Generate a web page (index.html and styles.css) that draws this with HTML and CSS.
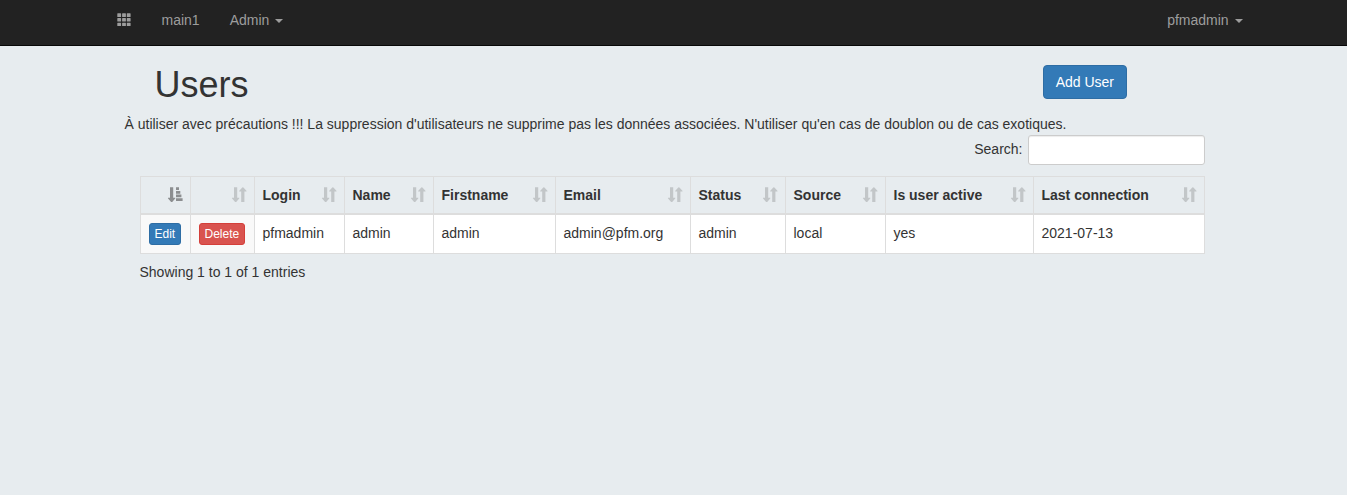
FILE: index.html
```html
<!DOCTYPE html>
<html lang="en">
<head>
<meta charset="utf-8">
<title>Users</title>
<link rel="stylesheet" href="styles.css">
</head>
<body>
<svg class="defs" aria-hidden="true">
  <symbol id="sort" viewBox="0 0 14 15">
    <path d="M2 .3h3.200V10.700h1.900q.5.2.1.7L4.200 14.900q-.6.400-1.100 0L.1 11.400q-.4-.5.1-.7H2z"/>
    <path d="M9.200 15V4.500H7.400q-.5-.2-.1-.7L10.300.5q.5-.4 1.100 0L14.400 3.800q.4.5-.1.700h-1.900V15z"/>
  </symbol>
  <symbol id="sort-asc" viewBox="0 0 14 15">
    <path d="M2 .3h3.200V10.700h1.900q.5.2.1.7L4.200 14.900q-.6.400-1.100 0L.1 11.400q-.4-.5.1-.7H2z"/>
    <path d="M8 .3h3v2.800H8zM8 3.900h4.300v2.800H8zM8 7.500h5.400v2.800H8zM8 11.200h6.600V14H8z"/>
  </symbol>
</svg>
<nav class="navbar">
  <a class="nav-item nav-grid"><svg class="grid-icon" viewBox="0 0 14 14"><path d="M.8.3h2.8q.5 0 .5.5v2.6q0 .5-.5.5H.8q-.5 0-.5-.5V.8Q.3.3.8.3zM5.6.3h2.8q.5 0 .5.5v2.6q0 .5-.5.5H5.6q-.5 0-.5-.5V.8q0-.5.5-.5zM10.3.3h2.8q.5 0 .5.5v2.6q0 .5-.5.5h-2.8q-.5 0-.5-.5V.8q0-.5.5-.5zM.8 5h2.8q.5 0 .5.5v2.6q0 .5-.5.5H.8q-.5 0-.5-.5V5.500Q.3 5 .8 5zM5.600 5h2.8q.5 0 .5.5v2.6q0 .5-.5.5H5.6q-.5 0-.5-.5V5.5q0-.5.5-.5zM10.3 5h2.8q.5 0 .5.5v2.6q0 .5-.5.5h-2.8q-.5 0-.5-.5V5.5q0-.5.5-.5zM.8 9.700h2.800q.5 0 .5.5v2.300q0 .5-.5.5H.8q-.5 0-.5-.5v-2.300q0-.5.5-.5zM5.600 9.700h2.800q.5 0 .5.5v2.300q0 .5-.5.5H5.600q-.5 0-.5-.5v-2.300q0-.5.5-.5zM10.300 9.700h2.800q.5 0 .5.5v2.300q0 .5-.5.5h-2.800q-.5 0-.5-.5v-2.300q0-.5.5-.5z"/></svg></a>
  <a class="nav-item">main1</a>
  <a class="nav-item">Admin <b class="caret"></b></a>
  <a class="nav-item nav-user">pfmadmin <b class="caret"></b></a>
</nav>
<main class="page">
  <header class="page-head">
    <h1 class="title">Users</h1>
    <button class="btn btn-primary">Add User</button>
  </header>
  <p class="notice">À utiliser avec précautions !!! La suppression d'utilisateurs ne supprime pas les données associées. N'utiliser qu'en cas de doublon ou de cas exotiques.</p>
  <section class="listing">
    <label class="search"><span class="search-label">Search:</span><input class="search-input" type="search"></label>
    <table class="users">
      <colgroup><col class="c-edit"><col class="c-delete"><col class="c-login"><col class="c-name"><col class="c-first"><col class="c-email"><col class="c-status"><col class="c-source"><col class="c-active"><col class="c-last"></colgroup>
      <thead>
        <tr>
          <th><div class="head"><span></span><svg class="sort sorted"><use href="#sort-asc"/></svg></div></th>
          <th><div class="head"><span></span><svg class="sort"><use href="#sort"/></svg></div></th>
          <th><div class="head">Login<svg class="sort"><use href="#sort"/></svg></div></th>
          <th><div class="head">Name<svg class="sort"><use href="#sort"/></svg></div></th>
          <th><div class="head">Firstname<svg class="sort"><use href="#sort"/></svg></div></th>
          <th><div class="head">Email<svg class="sort"><use href="#sort"/></svg></div></th>
          <th><div class="head">Status<svg class="sort"><use href="#sort"/></svg></div></th>
          <th><div class="head">Source<svg class="sort"><use href="#sort"/></svg></div></th>
          <th><div class="head">Is user active<svg class="sort"><use href="#sort"/></svg></div></th>
          <th><div class="head">Last connection<svg class="sort"><use href="#sort"/></svg></div></th>
        </tr>
      </thead>
      <tbody>
        <tr>
          <td class="action"><button class="btn btn-xs btn-primary">Edit</button></td>
          <td class="action"><button class="btn btn-xs btn-danger">Delete</button></td>
          <td>pfmadmin</td>
          <td>admin</td>
          <td>admin</td>
          <td>admin@pfm.org</td>
          <td>admin</td>
          <td>local</td>
          <td>yes</td>
          <td>2021-07-13</td>
        </tr>
      </tbody>
    </table>
    <p class="info">Showing 1 to 1 of 1 entries</p>
  </section>
</main>
</body>
</html>
```

FILE: styles.css
```css
* { box-sizing: border-box; }
body {
  margin: 0;
  background: #e7ecef;
  color: #333;
  font: 14px/20px "Liberation Sans", Arial, sans-serif;
}
.defs { display: none; }
.navbar {
  display: flex;
  align-items: flex-start;
  height: 46px;
  padding: 0 89.5px 0 102px;
  background: #222;
  border-bottom: 1px solid #080808;
}
.nav-item { padding: 10px 15px; color: #9d9d9d; white-space: nowrap; }
.nav-grid { display: flex; padding-top: 13px; }
.nav-user { margin-left: auto; }
.grid-icon { width: 14px; height: 14px; fill: currentColor; }
.nav-grid + .nav-item { padding-left: 15.5px; }
.caret {
  display: inline-block;
  margin-left: 2px;
  vertical-align: middle;
  border-top: 4px solid;
  border-left: 4px solid transparent;
  border-right: 4px solid transparent;
}
.page { width: 1095px; margin-left: 124.5px; }
.page-head {
  display: flex;
  justify-content: space-between;
  align-items: flex-start;
  height: 68px;
  padding: 19px 92.5px 0 30px;
}
.title { margin: 0; font-size: 36px; font-weight: 400; line-height: 40px; }
.btn {
  padding: 6px 12px;
  border: 1px solid;
  border-radius: 4px;
  color: #fff;
  font: inherit;
}
.btn-xs { display: block; padding: 1px 5px; border-radius: 3px; font-size: 12px; line-height: 18px; }
.btn-primary { background: #337ab7; border-color: #2e6da4; }
.btn-danger { background: #d9534f; border-color: #d43f3a; }
.notice { margin: 0; }
.listing { padding: 0 15px; }
.search {
  display: flex;
  justify-content: flex-end;
  align-items: flex-start;
  gap: 5.5px;
  margin-top: 1px;
}
.search-label { padding-top: 4px; }
.search-input {
  width: 177px;
  height: 30px;
  margin-right: -.5px;
  border: 1px solid #ccc;
  border-radius: 3px;
  background: #fff;
  box-shadow: inset 0 1px 1px rgba(0, 0, 0, .075);
}
.users {
  width: 1065px;
  margin-top: 11px;
  table-layout: fixed;
  border-collapse: separate;
  border-spacing: 0;
  border: 1px solid #ddd;
  border-width: 1px 0 0 1px;
}
.users th, .users td {
  padding: 8px 7.5px 8px 8px;
  border-right: 1px solid #ddd;
  text-align: left;
  vertical-align: top;
}
.users th { height: 38px; border-bottom: 2px solid #ddd; }
.users td { height: 39px; background: #fff; border-bottom: 1px solid #ddd; }
.users td.action { background: #f9f9f9; }
.head { display: flex; justify-content: space-between; white-space: nowrap; }
.sort { width: 14px; height: 15px; margin-top: 2px; fill: #333; opacity: .2; overflow: visible; }
.sort use { overflow: visible; }
#sort, #sort-asc { overflow: visible; }
.sorted { opacity: .5; }
.c-edit { width: 50px; }
.c-delete { width: 64px; }
.c-login { width: 90px; }
.c-name { width: 89px; }
.c-first { width: 122px; }
.c-email { width: 135px; }
.c-status { width: 95px; }
.c-source { width: 100px; }
.c-active { width: 148px; }
.c-last { width: 171px; }
.info { margin: 8px 0 0; }
```
